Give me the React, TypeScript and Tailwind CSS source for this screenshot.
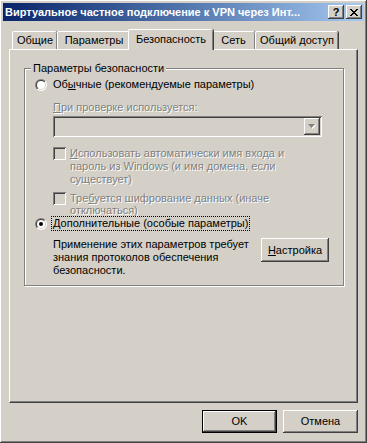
import React from 'react';

const raised =
  'shadow-[inset_-1px_-1px_#404040,inset_1px_1px_#fff,inset_-2px_-2px_#808080,inset_2px_2px_#d4d0c8]';
const sunken =
  'shadow-[inset_1px_1px_#808080,inset_-1px_-1px_#fff,inset_2px_2px_#404040,inset_-2px_-2px_#d4d0c8]';
const disabledText = 'text-[#808080] [text-shadow:1px_1px_0_#fff]';

const Radio: React.FC<{ checked?: boolean }> = ({ checked }) => {
  const id = React.useId().replace(/:/g, '');
  return (
    <svg width="12" height="12" viewBox="0 0 12 12" className="shrink-0">
      <defs>
        <linearGradient id={`o${id}`} x1="0" y1="0" x2="1" y2="1">
          <stop offset="0.5" stopColor="#808080" />
          <stop offset="0.5" stopColor="#ffffff" />
        </linearGradient>
        <linearGradient id={`i${id}`} x1="0" y1="0" x2="1" y2="1">
          <stop offset="0.5" stopColor="#404040" />
          <stop offset="0.5" stopColor="#d4d0c8" />
        </linearGradient>
      </defs>
      <circle cx="6" cy="6" r="6" fill={`url(#o${id})`} />
      <circle cx="6" cy="6" r="5" fill={`url(#i${id})`} />
      <circle cx="6" cy="6" r="4" fill="#fff" />
      {checked && <circle cx="6" cy="6" r="2" fill="#000" />}
    </svg>
  );
};

const Checkbox: React.FC = () => (
  <div className={`w-[13px] h-[13px] shrink-0 bg-[#d4d0c8] ${sunken}`} />
);

const Tab: React.FC<{ label: string; width: string; selected?: boolean }> = ({ label, width, selected }) =>
  selected ? (
    <div
      className={`relative z-10 -mx-[2px] -mb-[1px] h-[21px] ${width} flex items-start justify-center pt-[3px] bg-[#d4d0c8] border-l border-t border-white rounded-tl-[2px] rounded-tr-[2px] shadow-[inset_-1px_0_#808080,1px_0_#404040]`}
    >
      {label}
    </div>
  ) : (
    <div
      className={`h-[18px] ${width} flex items-center justify-center bg-[#d4d0c8] border-l border-t border-white rounded-tl-[2px] rounded-tr-[2px] shadow-[inset_-1px_0_#808080,1px_0_#404040]`}
    >
      {label}
    </div>
  );

const App: React.FC = () => {
  return (
    <div
      className={`w-[367px] h-[443px] bg-[#d4d0c8] p-[3px] flex flex-col text-[11px] leading-[13px] text-black font-['Liberation_Sans',Arial,sans-serif] ${raised}`}
    >
      {/* title bar */}
      <div className="h-[18px] flex items-center pl-[2px] pr-[2px] bg-linear-to-r from-[#0a246a] to-[#a6caf0]">
        <span className="flex-1 font-bold text-white whitespace-nowrap overflow-hidden">
          Виртуальное частное подключение к VPN через Инт...
        </span>
        <div className={`w-[16px] h-[14px] flex items-center justify-center bg-[#d4d0c8] font-bold text-[11px] ${raised}`}>
          ?
        </div>
        <div className={`ml-[2px] w-[16px] h-[14px] flex items-center justify-center bg-[#d4d0c8] ${raised}`}>
          <svg width="8" height="7" viewBox="0 0 8 7">
            <path d="M0 0h2v1H0zM6 0h2v1H6zM1 1h2v1H1zM5 1h2v1H5zM2 2h4v1H2zM3 3h2v1H3zM2 4h4v1H2zM1 5h2v1H1zM5 5h2v1H5zM0 6h2v1H0zM6 6h2v1H6z" fill="#000" />
          </svg>
        </div>
      </div>

      {/* tabs + panel */}
      <div className="px-[6px] pt-[8px] flex flex-col">
        <div className="flex items-end pl-[3px] h-[20px]">
          <Tab label="Общие" width="w-[45px]" />
          <Tab label="Параметры" width="w-[73px]" />
          <Tab label="Безопасность" width="w-[85px]" selected />
          <Tab label="Сеть" width="w-[44px]" />
          <Tab label="Общий доступ" width="w-[83px]" />
        </div>

        <div className="h-[354px] border-l border-t border-white border-r border-b border-r-[#404040] border-b-[#404040] shadow-[inset_-1px_-1px_#808080] pt-[18px] pl-[14px]">
          {/* group box */}
          <div className="relative w-[320px] h-[218px] border border-[#808080] shadow-[inset_1px_1px_#fff,1px_1px_#fff] flex flex-col pt-[9px] pl-[10px]">
            <span className="absolute -top-[7px] left-[6px] bg-[#d4d0c8] px-[2px]">Параметры безопасности</span>

            <div className="h-[13px] flex items-center">
              <div className="w-[18px] flex">
                <Radio />
              </div>
              <span>
                Об<span className="underline">ы</span>чные (рекомендуемые параметры)
              </span>
            </div>

            <div className={`mt-[10px] h-[13px] pl-[18px] ${disabledText}`}>
              <span className="underline">П</span>ри проверке используется:
            </div>

            <div className={`mt-[2px] ml-[18px] w-[269px] h-[21px] bg-[#d4d0c8] flex justify-end items-center pr-[2px] ${sunken}`}>
              <div className={`w-[16px] h-[17px] flex items-center justify-center ${raised}`}>
                <svg width="8" height="5" viewBox="0 0 8 5">
                  <path d="M1 1h7L4.5 5z" fill="#fff" />
                  <path d="M0 0h7L3.5 4z" fill="#808080" />
                </svg>
              </div>
            </div>

            <div className="mt-[10px] ml-[18px] flex">
              <Checkbox />
              <div className={`ml-[4px] ${disabledText}`}>
                <span className="underline">И</span>спользовать автоматически имя входа и
                <br />
                пароль из Windows (и имя домена, если
                <br />
                существует)
              </div>
            </div>

            <div className="mt-[6px] ml-[18px] h-[25px] flex">
              <Checkbox />
              <div className={`ml-[4px] leading-[12px] ${disabledText}`}>
                Тре<span className="underline">б</span>уется шифрование данных (иначе
                <br />
                отключаться)
              </div>
            </div>

            <div className="h-[13px] flex items-center">
              <div className="w-[17px] flex">
                <Radio checked />
              </div>
              <span className="outline-1 outline-dotted outline-black px-[1px]">
                <span className="underline">Д</span>ополнительные (особые параметры)
              </span>
            </div>

            <div className="mt-[8px] pl-[18px] flex items-start">
              <div className="w-[208px]">
                Применение этих параметров требует
                <br />
                знания протоколов обеспечения
                <br />
                безопасности.
              </div>
              <div className={`w-[68px] h-[24px] flex items-center justify-center ${raised}`}>
                <span>
                  <span className="underline">Н</span>астройка
                </span>
              </div>
            </div>
          </div>
        </div>
      </div>

      {/* buttons */}
      <div className="mt-[7px] pr-[6px] flex justify-end gap-[6px]">
        <div className="w-[75px] h-[23px] border border-black">
          <div className={`w-full h-full flex items-center justify-center ${raised}`}>OK</div>
        </div>
        <div className={`w-[75px] h-[23px] flex items-center justify-center ${raised}`}>Отмена</div>
      </div>
    </div>
  );
};

export default App;
